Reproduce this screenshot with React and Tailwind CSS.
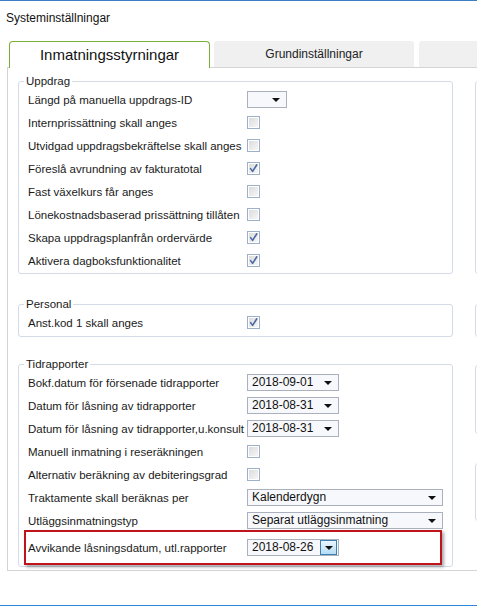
import React from "react";

const F = { fontFamily: '"Liberation Sans", Arial, sans-serif' };

function Check({ checked }) {
  return (
    <div className="w-[13px] h-[13px] border border-[#9eb0c8] bg-white p-[1px] shrink-0">
      <div className="w-full h-full bg-gradient-to-br from-[#dcdcdc] to-[#f6f6f6] flex items-center justify-center">
        {checked && (
          <svg width="9" height="9" viewBox="0 0 9 9">
            <path d="M1.6 4.6 L3.6 7.4 L7.8 0.8" fill="none" stroke="#4a6aa3" strokeWidth="1.6" strokeLinecap="round" strokeLinejoin="round" />
          </svg>
        )}
      </div>
    </div>
  );
}

function Arrow() {
  return (
    <svg width="8" height="4" viewBox="0 0 8 4" className="shrink-0">
      <polygon points="0,0 8,0 4,4" fill="#111" />
    </svg>
  );
}

function Drop({ value, w, active }) {
  return (
    <div
      className={`h-[17px] border border-[#abb0bd] bg-[#f7f8fc] flex items-center shrink-0 ${w}`}
    >
      <span className="flex-1 pl-[4px] text-[12px] leading-[15px] text-[#111] whitespace-nowrap overflow-hidden">{value}</span>
      {active ? (
        <div className="w-[17px] h-[15px] mr-[1px] border border-[#3c7fb1] bg-gradient-to-b from-[#eaf6fd] to-[#b6dcf5] flex items-center justify-center">
          <Arrow />
        </div>
      ) : (
        <div className="w-[17px] flex items-center justify-center mr-[2px]">
          <Arrow />
        </div>
      )}
    </div>
  );
}

function Row({ label, children }) {
  return (
    <div className="flex items-center h-[23px]">
      <div className="w-[219px] shrink-0 whitespace-nowrap text-[11.5px] text-[#1a1a1a] leading-[14px]">{label}</div>
      {children}
    </div>
  );
}

function Group({ title, children, pb }) {
  return (
    <fieldset className={`border border-[#d3dce6] rounded-[3px] pl-[9px] pr-[8px] ${pb}`}>
      <legend className="-ml-[4px] px-[2px] text-[11.5px] leading-[14px] text-[#1a1a1a]">{title}</legend>
      {children}
    </fieldset>
  );
}

export default function App() {
  return (
    <div className="w-[477px] h-[607px] bg-white overflow-hidden flex flex-col border-t border-[#3d7fc4]" style={F}>
      <div className="h-[40px] pl-[6px] pt-[10px] text-[12px] leading-[14px] text-[#111]">Systeminställningar</div>
      <div className="flex pl-[9px] h-[26px] items-start">
        <div className="relative z-10 shrink-0 w-[201px] h-[27px] border border-b-0 border-[#7cae3c] rounded-t-[4px] bg-white flex items-center justify-center text-[15px] text-[#111]">
          Inmatningsstyrningar
        </div>
        <div className="ml-[4px] shrink-0 w-[200px] h-[26px] bg-[#f0f0f0] rounded-t-[3px] flex items-center justify-center text-[12px] text-[#222]">
          Grundinställningar
        </div>
        <div className="ml-[5px] w-[100px] h-[26px] bg-[#f0f0f0] rounded-t-[3px] shrink-0" />
      </div>
      <div className="ml-[7px] h-[504px] border-t border-l border-b border-[#d4d4d4] flex gap-[22px] pl-[10px] pt-[6px] pb-[3px] shrink-0">
        <div className="w-[435px] shrink-0 flex flex-col">
          <Group title="Uppdrag" pb="pb-[1px]">
            <Row label="Längd på manuella uppdrags-ID"><Drop value="" w="w-[40px]" /></Row>
            <Row label="Internprissättning skall anges"><Check /></Row>
            <Row label="Utvidgad uppdragsbekräftelse skall anges"><Check /></Row>
            <Row label="Föreslå avrundning av fakturatotal"><Check checked /></Row>
            <Row label="Fast växelkurs får anges"><Check /></Row>
            <Row label="Lönekostnadsbaserad prissättning tillåten"><Check /></Row>
            <Row label="Skapa uppdragsplanfrån ordervärde"><Check checked /></Row>
            <Row label="Aktivera dagboksfunktionalitet"><Check checked /></Row>
          </Group>
          <div className="mt-[23px]">
            <Group title="Personal" pb="pb-[2px]">
              <Row label="Anst.kod 1 skall anges"><Check checked /></Row>
            </Group>
          </div>
          <div className="mt-[20px]">
            <Group title="Tidrapporter" pb="pb-[1px]">
              <Row label="Bokf.datum för försenade tidrapporter"><Drop value="2018-09-01" w="w-[92px]" /></Row>
              <Row label="Datum för låsning av tidrapporter"><Drop value="2018-08-31" w="w-[92px]" /></Row>
              <Row label="Datum för låsning av tidrapporter,u.konsult"><Drop value="2018-08-31" w="w-[92px]" /></Row>
              <Row label="Manuell inmatning i reseräkningen"><Check /></Row>
              <Row label="Alternativ beräkning av debiteringsgrad"><Check /></Row>
              <Row label="Traktamente skall beräknas per"><Drop value="Kalenderdygn" w="w-[196px]" /></Row>
              <Row label="Utläggsinmatningstyp"><Drop value="Separat utläggsinmatning" w="w-[196px]" /></Row>
              <div className="relative z-10 -mt-[2px] -ml-[4px] w-[418px] h-[35px] border-2 border-[#c0141c] shadow-[2px_2px_3px_rgba(0,0,0,0.35)] flex items-center pl-[2px]">
                <div className="w-[219px] shrink-0 whitespace-nowrap text-[11.5px] text-[#1a1a1a] leading-[14px]">Avvikande låsningsdatum, utl.rapporter</div>
                <Drop value="2018-08-26" w="w-[92px]" active />
              </div>
            </Group>
          </div>
        </div>
        <div className="w-[200px] shrink-0 flex flex-col">
          <div className="mt-[7px] h-[193px] border border-[#d3dce6] rounded-[3px]" />
          <div className="mt-[30px] h-[33px] border border-[#d3dce6] rounded-[3px]" />
          <div className="mt-[28px] h-[69px] border border-[#d3dce6] rounded-[3px]" />
          <div className="mt-[29px] h-[58px] border border-[#d3dce6] rounded-[3px]" />
        </div>
      </div>
      <div className="flex-1" />
      <div className="h-[1px] bg-[#2b88d8] mb-[1px]" />
    </div>
  );
}
